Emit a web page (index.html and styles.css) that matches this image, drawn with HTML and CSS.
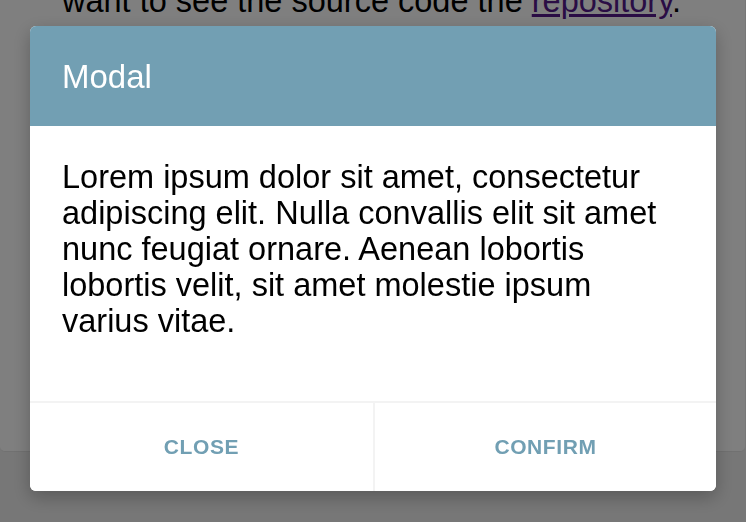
FILE: index.html
```html
<!DOCTYPE html>
<html lang="en">
<head>
<meta charset="utf-8">
<title>Modal</title>
<link rel="stylesheet" href="styles.css">
</head>
<body>
<main class="page">
  <section class="card">
    <p class="card-text">want to see the source code the <a href="#" class="card-link">repository</a>.</p>
  </section>
</main>
<div class="overlay">
  <div class="modal" role="dialog" aria-labelledby="modal-title">
    <header class="modal-header">
      <h2 class="modal-title" id="modal-title">Modal</h2>
    </header>
    <div class="modal-body">
      <p class="modal-text">Lorem ipsum dolor sit amet, consectetur adipiscing elit. Nulla convallis elit sit amet nunc feugiat ornare. Aenean lobortis lobortis velit, sit amet molestie ipsum varius vitae.</p>
    </div>
    <footer class="modal-footer">
      <button class="modal-btn" type="button">CLOSE</button>
      <button class="modal-btn" type="button">CONFIRM</button>
    </footer>
  </div>
</div>
</body>
</html>
```

FILE: styles.css
```css
html, body {
  margin: 0;
  padding: 0;
  height: 100%;
}

body {
  background: #eeeeee;
  font-family: "Liberation Sans", Arial, Helvetica, sans-serif;
  overflow: hidden;
}

.page {
  height: 100%;
}

.card {
  background: #ffffff;
  margin: -26px 1px 0 0;
  border-radius: 0 0 5px 5px;
  border-bottom: 1px solid #e2e2e2;
  padding: 0 20px 0 62px;
  height: 478px;
  box-sizing: border-box;
}

.card-text {
  margin: 0;
  font-size: 32.5px;
  line-height: 36px;
  color: #000;
  padding-top: 9px;
  white-space: nowrap;
}

.card-link {
  color: #551a8b;
}

.overlay {
  position: fixed;
  inset: 0;
  background: rgba(0, 0, 0, 0.5);
  display: flex;
  align-items: flex-start;
  padding: 26px 30px;
}

.modal {
  flex: 1;
  background: #ffffff;
  border-radius: 6px;
  overflow: hidden;
  box-shadow: 0 6px 18px rgba(0, 0, 0, 0.25);
  display: flex;
  flex-direction: column;
}

.modal-header {
  background: #729fb3;
  height: 100px;
  box-sizing: border-box;
  padding: 33px 32px 0 32px;
}

.modal-title {
  margin: 0;
  color: #ffffff;
  font-weight: normal;
  font-size: 33px;
  line-height: 36px;
}

.modal-body {
  height: 275px;
  box-sizing: border-box;
  padding: 33px 32px 0 32px;
}

.modal-text {
  margin: 0;
  max-width: 600px;
  font-size: 32.5px;
  line-height: 36px;
  color: #000;
}

.modal-footer {
  display: grid;
  grid-template-columns: 1fr 1fr;
  border-top: 2px solid #f3f3f3;
  height: 90px;
  box-sizing: border-box;
}

.modal-btn {
  background: #ffffff;
  border: 0;
  font-family: "Liberation Sans", Arial, Helvetica, sans-serif;
  font-weight: bold;
  font-size: 21px;
  letter-spacing: 0.6px;
  color: #719fb3;
  padding: 0;
  cursor: pointer;
}

.modal-btn + .modal-btn {
  border-left: 2px solid #f3f3f3;
}
```
